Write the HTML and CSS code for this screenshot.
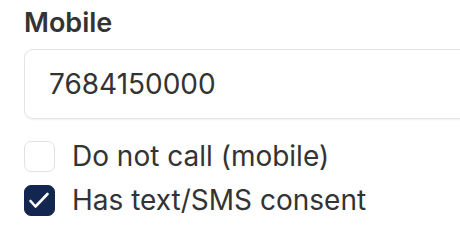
FILE: index.html
```html
<!DOCTYPE html>
<html lang="en">
<head>
    <meta charset="UTF-8">
    <title>Mobile</title>
    <link rel="stylesheet" href="styles.css">
</head>
<body>
    <div class="field">
        <label class="field-label" for="mobile">Mobile</label>
        <input type="text" id="mobile" name="mobile" value="7684150000">
    </div>

    <div class="options">
        <label class="option">
            <span class="box"></span>
            <span>Do not call (mobile)</span>
        </label>
        <label class="option">
            <span class="box checked">
                <svg viewBox="0 0 31 31" width="31" height="31">
                    <path d="M6.5 16l5 5.5L23.5 9" fill="none" stroke="#ffffff" stroke-width="2.6" stroke-linecap="round" stroke-linejoin="round"/>
                </svg>
            </span>
            <span>Has text/SMS consent</span>
        </label>
    </div>
</body>
</html>
```

FILE: styles.css
```css
html, body {
    background-color: #ffffff;
    color: #333333;
    font-family: Inter, "Noto Sans", sans-serif;
    margin: 0;
    padding: 0;
    overflow: hidden;
}

body {
    padding: 6px 0 0 24px;
}

.field {
    display: flex;
    flex-direction: column;
    overflow: hidden;
    padding-bottom: 2px;
}

.field-label {
    font-size: 27px;
    font-weight: 600;
    line-height: 34px;
    margin-bottom: 9px;
}

input[type="text"] {
    width: 520px;
    flex-shrink: 0;
    height: 70px;
    box-sizing: border-box;
    padding: 0 24px;
    border: 1.5px solid #e4e4e4;
    border-radius: 9px;
    box-shadow: 0 1px 2px rgba(0, 0, 0, 0.06);
    font-family: inherit;
    font-size: 28px;
    color: #333333;
    outline: none;
}

.options {
    display: flex;
    flex-direction: column;
    gap: 13px;
    margin-top: 20px;
}

.option {
    display: flex;
    align-items: center;
    gap: 17px;
    font-size: 28px;
    line-height: 31px;
}

.box {
    width: 31px;
    height: 31px;
    flex-shrink: 0;
    box-sizing: border-box;
    border: 1.5px solid #e2e2e2;
    border-radius: 7px;
    background-color: #ffffff;
    display: flex;
    align-items: center;
    justify-content: center;
}

.box.checked {
    background-color: #13264f;
    border-color: #13264f;
}

.box svg {
    flex-shrink: 0;
}
```
